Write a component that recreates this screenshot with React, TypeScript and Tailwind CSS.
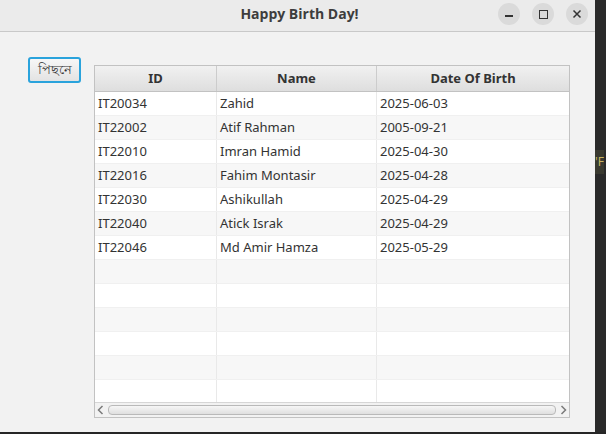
import React from 'react';

const rows = [
  { id: 'IT20034', name: 'Zahid', dob: '2025-06-03' },
  { id: 'IT22002', name: 'Atif Rahman', dob: '2005-09-21' },
  { id: 'IT22010', name: 'Imran Hamid', dob: '2025-04-30' },
  { id: 'IT22016', name: 'Fahim Montasir', dob: '2025-04-28' },
  { id: 'IT22030', name: 'Ashikullah', dob: '2025-04-29' },
  { id: 'IT22040', name: 'Atick Israk', dob: '2025-04-29' },
  { id: 'IT22046', name: 'Md Amir Hamza', dob: '2025-05-29' },
];

const EMPTY_ROWS = 6;

function TitleBar() {
  return (
    <div className="relative h-[32px] shrink-0 bg-[#ebebeb] border-b border-[#c9c9c9] flex items-center justify-center">
      <span className="text-[14px] font-bold text-[#3d3d3d] -mt-[5px] ml-[4px]" style={{ fontFamily: '"Open Sans", sans-serif' }}>
        Happy Birth Day!
      </span>
      {/* Window controls */}
      <div className="absolute right-[7px] top-[3px] flex gap-[12px]">
        <div className="w-[22px] h-[22px] rounded-full bg-[#dadada] flex items-center justify-center">
          <div className="w-[8px] h-[1.5px] bg-[#333] mt-[4px]" />
        </div>
        <div className="w-[22px] h-[22px] rounded-full bg-[#dadada] flex items-center justify-center">
          <div className="w-[9px] h-[9px] border-[1.5px] border-[#333]" />
        </div>
        <div className="w-[22px] h-[22px] rounded-full bg-[#dadada] flex items-center justify-center">
          <svg width="10" height="10" viewBox="0 0 10 10">
            <path d="M1.5 1.5 L8.5 8.5 M8.5 1.5 L1.5 8.5" stroke="#333" strokeWidth="1.5" />
          </svg>
        </div>
      </div>
    </div>
  );
}

function BirthdayTable() {
  const cell = 'h-[23px] flex items-center px-[3px] border-r border-[#e9e9e9]';
  return (
    <div className="ml-[13px] mt-[8px] w-[476px] h-[353px] border border-[#c2c2c2] bg-white flex flex-col overflow-hidden">
      {/* Header */}
      <div className="flex h-[26px] shrink-0 bg-gradient-to-b from-[#f1f1f1] to-[#dedede] border-b border-[#c2c2c2] text-[13px] font-bold text-[#333]">
        <div className="w-[122px] flex items-center justify-center border-r border-[#cccccc]">ID</div>
        <div className="w-[160px] flex items-center justify-center border-r border-[#cccccc]">Name</div>
        <div className="flex-1 flex items-center justify-center">Date Of Birth</div>
      </div>
      {/* Rows */}
      <div className="flex-1 overflow-hidden text-[13px] text-[#333]">
        {rows.map((r, i) => (
          <div key={r.id} className={`flex border-b border-[#f0f0f0] ${i % 2 === 1 ? 'bg-[#f7f7f7]' : 'bg-white'}`}>
            <div className={`${cell} w-[122px]`}>{r.id}</div>
            <div className={`${cell} w-[160px]`}>{r.name}</div>
            <div className={`${cell} flex-1 border-r-0`}>{r.dob}</div>
          </div>
        ))}
        {Array.from({ length: EMPTY_ROWS }).map((_, j) => {
          const i = rows.length + j;
          return (
            <div key={i} className={`flex border-b border-[#f0f0f0] ${i % 2 === 1 ? 'bg-[#f7f7f7]' : 'bg-white'}`}>
              <div className={`${cell} w-[122px]`} />
              <div className={`${cell} w-[160px]`} />
              <div className={`${cell} flex-1 border-r-0`} />
            </div>
          );
        })}
      </div>
      {/* Horizontal scrollbar */}
      <div className="h-[15px] shrink-0 bg-[#f2f2f2] border-t border-[#d6d6d6] flex items-center px-[2px] gap-[4px]">
        <svg width="7" height="10" viewBox="0 0 7 10">
          <path d="M5.5 1 L1.5 5 L5.5 9" stroke="#7a7a7a" strokeWidth="1.5" fill="none" />
        </svg>
        <div className="flex-1 h-[10px] rounded-[4px] border border-[#b9b9b9] bg-gradient-to-b from-[#f6f6f6] to-[#dfdfdf]" />
        <svg width="7" height="10" viewBox="0 0 7 10">
          <path d="M1.5 1 L5.5 5 L1.5 9" stroke="#7a7a7a" strokeWidth="1.5" fill="none" />
        </svg>
      </div>
    </div>
  );
}

export default function App() {
  return (
    <div className="w-[606px] h-[434px] bg-[#262626] overflow-hidden" style={{ fontFamily: '"Noto Sans", sans-serif' }}>
      <div className="flex h-[432px]">
        <div className="w-[595px] h-[432px] bg-[#f2f2f2] flex flex-col">
          <TitleBar />
          <div className="flex pl-[28px] pt-[25px]">
            <button className="w-[53px] h-[26px] shrink-0 rounded-[3px] border-2 border-[#2aa3dc] bg-gradient-to-b from-[#f7f7f7] to-[#e3e3e3] text-[13px] text-[#333] flex items-center justify-center">
              পিছনে
            </button>
            <BirthdayTable />
          </div>
        </div>
        <div className="flex-1 bg-[#2a2a2a] relative">
          <div className="absolute left-0 top-[150px] h-[24px] bg-[#3a3a30] text-[#c8b560] text-[12px] leading-[24px] whitespace-nowrap">
            'F
          </div>
        </div>
      </div>
    </div>
  );
}
